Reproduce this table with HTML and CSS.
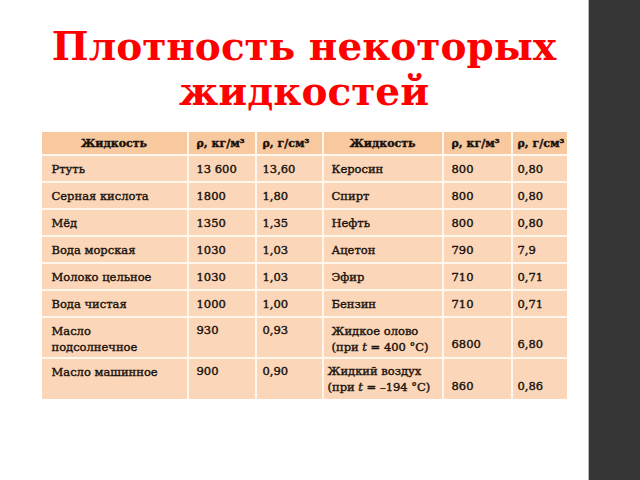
FILE: index.html
```html
<!DOCTYPE html>
<html lang="ru">
<head>
<meta charset="utf-8">
<title>Плотность некоторых жидкостей</title>
<link rel="stylesheet" href="styles.css">
</head>
<body>
<div class="page">
  <main class="slide">
    <h1 class="title">Плотность некоторых жидкостей</h1>
    <table class="density">
      <colgroup>
        <col class="c-name1">
        <col class="c-kg1">
        <col class="c-g1">
        <col class="c-name2">
        <col class="c-kg2">
        <col class="c-g2">
      </colgroup>
      <thead>
        <tr>
          <th class="name-h">Жидкость</th>
          <th>ρ, кг/м³</th>
          <th>ρ, г/см³</th>
          <th class="name-h">Жидкость</th>
          <th>ρ, кг/м³</th>
          <th>ρ, г/см³</th>
        </tr>
      </thead>
      <tbody>
        <tr><td class="name">Ртуть</td><td>13 600</td><td>13,60</td><td class="name">Керосин</td><td>800</td><td>0,80</td></tr>
        <tr><td class="name">Серная кислота</td><td>1800</td><td>1,80</td><td class="name">Спирт</td><td>800</td><td>0,80</td></tr>
        <tr><td class="name">Мёд</td><td>1350</td><td>1,35</td><td class="name">Нефть</td><td>800</td><td>0,80</td></tr>
        <tr><td class="name">Вода морская</td><td>1030</td><td>1,03</td><td class="name">Ацетон</td><td>790</td><td>7,9</td></tr>
        <tr><td class="name">Молоко цельное</td><td>1030</td><td>1,03</td><td class="name">Эфир</td><td>710</td><td>0,71</td></tr>
        <tr><td class="name">Вода чистая</td><td>1000</td><td>1,00</td><td class="name">Бензин</td><td>710</td><td>0,71</td></tr>
        <tr class="tall">
          <td class="name top">Масло<br>подсолнечное</td><td class="top">930</td><td class="top">0,93</td>
          <td class="name top">Жидкое олово<br>(при <i>t</i> = 400 °C)</td><td class="bottom">6800</td><td class="bottom">6,80</td>
        </tr>
        <tr class="tall last">
          <td class="name top">Масло машинное</td><td class="top">900</td><td class="top">0,90</td>
          <td class="name top air">Жидкий воздух<br>(при <i>t</i> = –194 °C)</td><td class="bottom">860</td><td class="bottom">0,86</td>
        </tr>
      </tbody>
    </table>
  </main>
  <aside class="sidebar"></aside>
</div>
</body>
</html>
```
FILE: styles.css
```css
html, body {
  margin: 0;
  padding: 0;
  background: #ffffff;
}

.page {
  display: flex;
  width: 640px;
  height: 480px;
  overflow: hidden;
}

.slide {
  flex: 1;
  padding-left: 20px;
  display: flex;
  flex-direction: column;
  align-items: center;
}

.title {
  margin: 24px 0 0 0;
  width: 560px;
  text-align: center;
  font-family: "DejaVu Serif", "Liberation Serif", serif;
  font-weight: bold;
  font-size: 39px;
  line-height: 45px;
  color: #ff0000;
}

.density {
  margin-top: 18px;
  width: 525px;
  border-collapse: collapse;
  font-family: "DejaVu Serif", "Liberation Serif", serif;
  font-size: 11.5px;
  color: #1a120d;
  background: #fbd6b8;
  table-layout: fixed;
  -webkit-text-stroke: 0.4px #1a120d;
}

.c-name1 { width: 146px; }
.c-kg1 { width: 68px; }
.c-g1 { width: 67px; }
.c-name2 { width: 120px; }
.c-kg2 { width: 69px; }
.c-g2 { width: 55px; }

.density th,
.density td {
  border: 2px solid #fff6ee;
  padding: 0 0 0 8px;
  text-align: left;
  vertical-align: middle;
  white-space: nowrap;
  overflow: visible;
}

.density thead th {
  background: #f8c89e;
  height: 22px;
  font-weight: bold;
  font-size: 11px;
  border-top: none;
}

.density thead th.name-h {
  text-align: center;
  padding-left: 0;
}

.density tbody tr {
  height: 27px;
}

.density tbody tr.tall {
  height: 41px;
}

.density tr > :first-child { border-left: none; padding-left: 10px; }
.density tr > :nth-child(3) { padding-left: 6px; }
.density tr > :nth-child(4) { padding-left: 8px; }
.density tr > :last-child { border-right: none; padding-left: 5px; }

.density tbody tr.last td { border-bottom: none; }

.density td.name {
  line-height: 16px;
}

.density td.top {
  vertical-align: top;
  padding-top: 5px;
}

.density td.bottom {
  vertical-align: bottom;
  padding-bottom: 6px;
}

.density td.air {
  padding-left: 4px;
  padding-top: 4px;
}

.sidebar {
  width: 51px;
  flex: none;
  background: #363636;
  border-left: 1px solid #b8b8b8;
}
```
